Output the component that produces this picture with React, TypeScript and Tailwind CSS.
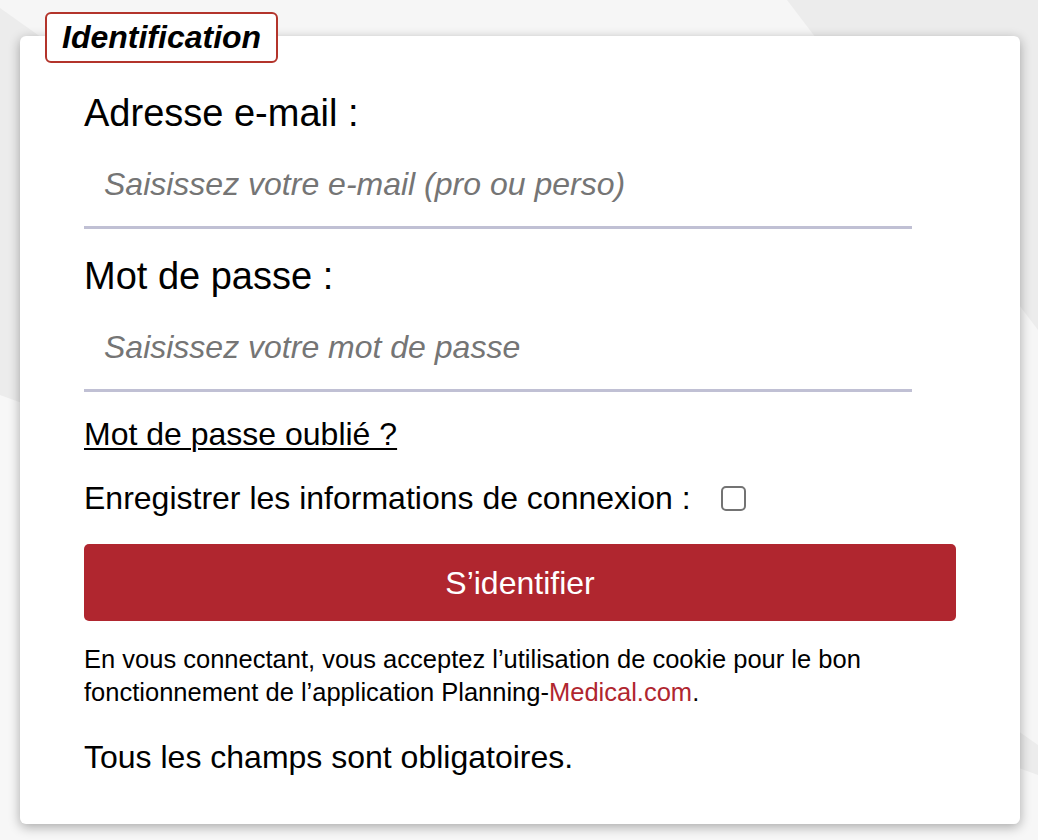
// App.tsx
// Login card "Identification" for Planning-Medical.com

import React, { useState } from 'react';

function Backdrop() {
    return (
        <svg
            className="absolute inset-0 w-full h-full"
            viewBox="0 0 1038 840"
            preserveAspectRatio="none"
        >
            <rect x="0" y="0" width="1038" height="840" fill="#ececec" />
            <polygon points="0,0 787,0 1038,330 1038,745 0,8" fill="#f6f6f6" />
            <polygon points="0,395 1038,775 1038,840 0,840" fill="#f7f7f7" />
        </svg>
    );
}

export default function App() {
    const [email, setEmail] = useState('');
    const [password, setPassword] = useState('');
    const [remember, setRemember] = useState(false);

    return (
        <div className="relative min-h-[840px] w-full overflow-hidden font-['Liberation_Sans',Arial,sans-serif] text-black">
            <Backdrop />
            <div className="relative pt-[36px] pl-[20px]">
                <div className="relative w-[1000px] bg-white rounded-[6px] shadow-[0_3px_12px_rgba(0,0,0,0.32)] pt-[55px] pb-[48px] px-[64px]">
                    <div className="absolute left-[25px] top-[-24px] h-[51px] flex items-center bg-white border-2 border-[#b3342b] rounded-[6px] px-[15px]">
                        <span className="text-[32px] leading-[37px] font-bold italic">Identification</span>
                    </div>

                    <label className="block text-[38px] leading-[44px] mb-[7px]" htmlFor="email">
                        Adresse e-mail :
                    </label>
                    <input
                        id="email"
                        type="email"
                        value={email}
                        onChange={(e) => setEmail(e.target.value)}
                        placeholder="Saisissez votre e-mail (pro ou perso)"
                        className="block w-[95%] h-[87px] pl-[20px] bg-transparent text-[32px] outline-none border-b-[3px] border-[#c0c0d4] placeholder:italic placeholder:text-[#757575]"
                    />

                    <label className="block mt-[25px] text-[38px] leading-[44px] mb-[7px]" htmlFor="password">
                        Mot de passe :
                    </label>
                    <input
                        id="password"
                        type="password"
                        value={password}
                        onChange={(e) => setPassword(e.target.value)}
                        placeholder="Saisissez votre mot de passe"
                        className="block w-[95%] h-[87px] pl-[20px] bg-transparent text-[32px] outline-none border-b-[3px] border-[#c0c0d4] placeholder:italic placeholder:text-[#757575]"
                    />

                    <div className="mt-[24px] text-[32px] leading-[37px]">
                        <a href="#" className="underline decoration-[2px] underline-offset-[3px]">
                            Mot de passe oublié ?
                        </a>
                    </div>

                    <div className="mt-[27px] flex items-center text-[32px] leading-[37px]">
                        <span>Enregistrer les informations de connexion :</span>
                        <input
                            type="checkbox"
                            checked={remember}
                            onChange={() => setRemember(!remember)}
                            className="ml-[30px] appearance-none w-[25px] h-[25px] border-2 border-[#737373] rounded-[5px] bg-white checked:bg-[#b0262f]"
                        />
                    </div>

                    <button
                        type="button"
                        className="mt-[27px] block w-full h-[77px] rounded-[5px] bg-[#b0262f] text-white text-[32px]"
                    >
                        S’identifier
                    </button>

                    <p className="mt-[22px] text-[25.5px] leading-[33px]">
                        En vous connectant, vous acceptez l’utilisation de cookie pour le bon fonctionnement de l’application Planning-<span className="text-[#b0262f]">Medical.com</span>.
                    </p>

                    <p className="mt-[30px] text-[32px] leading-[37px]">Tous les champs sont obligatoires.</p>
                </div>
            </div>
        </div>
    );
}
